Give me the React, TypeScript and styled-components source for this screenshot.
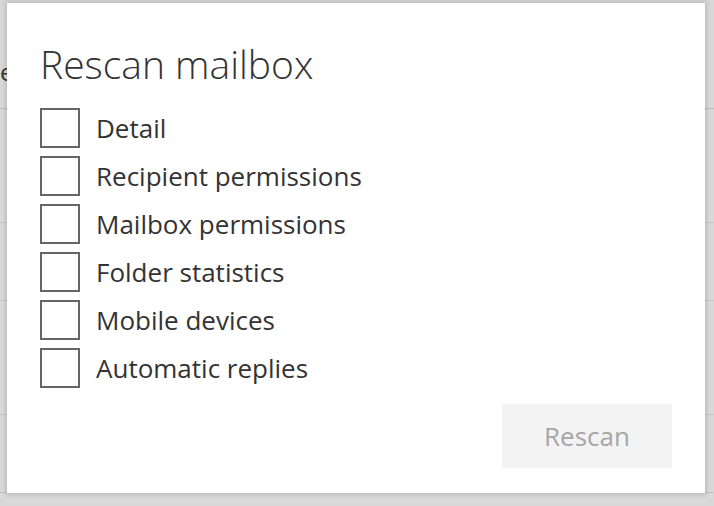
import styled, { createGlobalStyle } from "styled-components";

const GlobalStyle = createGlobalStyle`
    html, body {
        margin: 0;
        padding: 0;
        width: 714px;
        height: 506px;
        overflow: hidden;
        background: #d6d6d6;
        font-family: "Open Sans", "Noto Sans", sans-serif;
    }
`;

const Page = styled.div`
    position: relative;
    width: 714px;
    height: 506px;
    overflow: hidden;
    background: #d8d8d8;
`;

// list behind the dialog, only its left edge shows
const Backdrop = styled.div`
    display: flex;
    flex-direction: column;
    padding-top: 56px;
    color: #333;
    font-size: 24px;
`;

const BackdropHeader = styled.div`
    height: 52px;
    line-height: 32px;
    border-bottom: 1px solid #bcbcbc;
`;

const BackdropRow = styled.div<{ $h: number }>`
    height: ${p => p.$h}px;
    border-bottom: 1px solid #c4c4c4;
`;

const Dialog = styled.div`
    position: absolute;
    left: 7px;
    top: 3px;
    width: 698px;
    height: 490px;
    box-sizing: border-box;
    background: #fff;
    box-shadow: 0 0 4px 2px rgba(0, 0, 0, 0.12);
    padding: 36px 33px 25px 33px;
    display: flex;
    flex-direction: column;
`;

const Title = styled.h1`
    margin: 0 0 19px 0;
    font-weight: 300;
    font-size: 39px;
    line-height: 50px;
    color: #333;
`;

const Options = styled.div`
    display: flex;
    flex-direction: column;
    gap: 8px;
`;

const Option = styled.label`
    display: flex;
    align-items: center;
    gap: 16px;
    height: 40px;
    font-size: 26px;
    color: #333;
`;

const Box = styled.span`
    width: 40px;
    height: 40px;
    box-sizing: border-box;
    border: 2px solid #666;
    background: #fff;
    flex-shrink: 0;
`;

const Footer = styled.div`
    margin-top: auto;
    display: flex;
    justify-content: flex-end;
`;

const Button = styled.button`
    width: 170px;
    height: 64px;
    border: none;
    background: #f3f3f3;
    color: #a6a6a6;
    font-family: "Open Sans", "Noto Sans", sans-serif;
    font-size: 26px;
    cursor: default;
`;

const options = [
    "Detail",
    "Recipient permissions",
    "Mailbox permissions",
    "Folder statistics",
    "Mobile devices",
    "Automatic replies",
];

export default function App() {
    return <Page>
        <GlobalStyle />
        <Backdrop>
            <BackdropHeader>e</BackdropHeader>
            <BackdropRow $h={113} />
            <BackdropRow $h={77} />
            <BackdropRow $h={113} />
            <BackdropRow $h={77} />
        </Backdrop>
        <Dialog>
            <Title>Rescan mailbox</Title>
            <Options>
                {options.map(o => <Option key={o}><Box />{o}</Option>)}
            </Options>
            <Footer>
                <Button disabled>Rescan</Button>
            </Footer>
        </Dialog>
    </Page>;
}
